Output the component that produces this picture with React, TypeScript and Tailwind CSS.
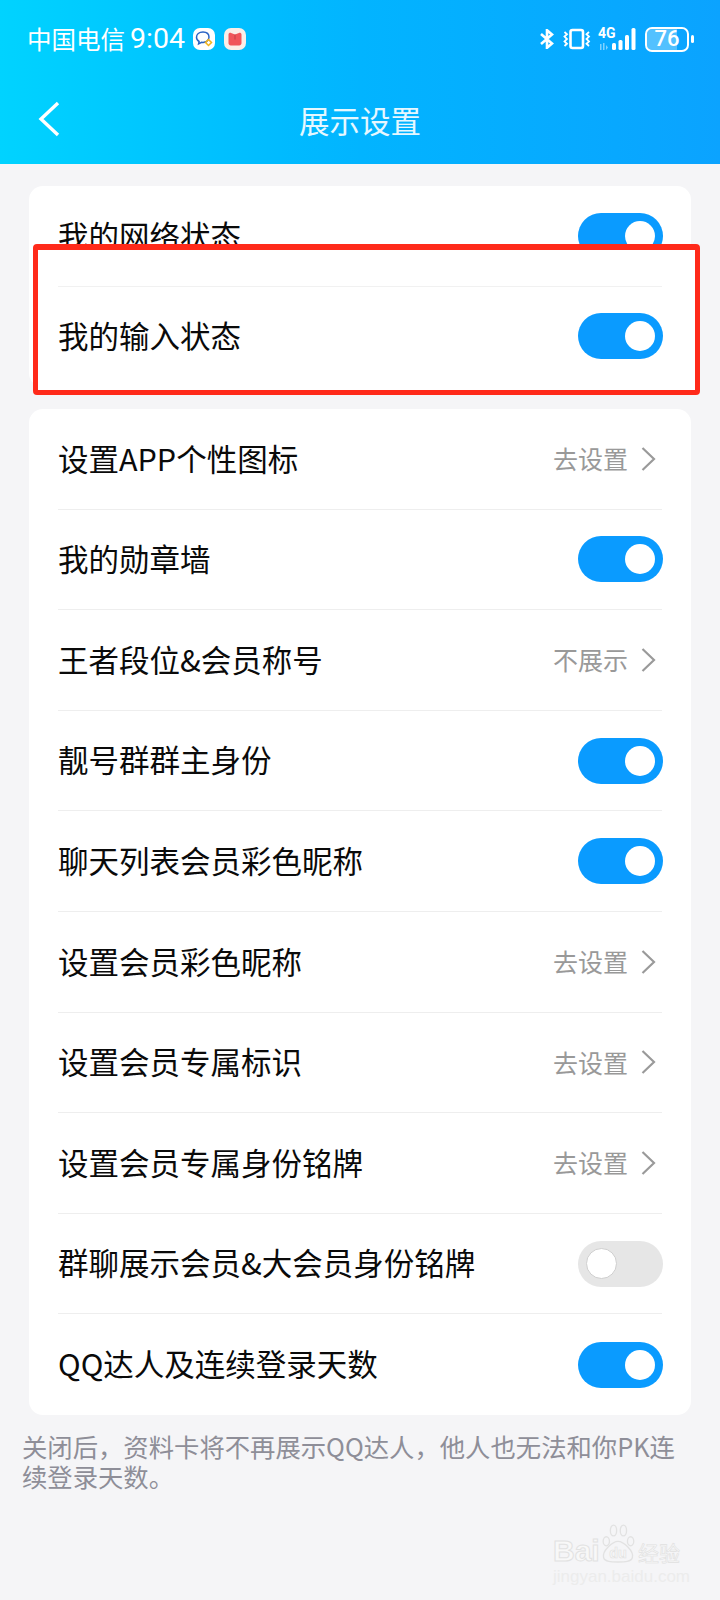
import React from "react";

const FONT = "font-['Noto_Sans_CJK_SC','Noto_Sans',sans-serif]";

function Toggle({ on = true }: { on?: boolean }) {
  return on ? (
    <div className="-mr-px flex h-[46px] w-[85px] shrink-0 items-center justify-end rounded-full bg-[#0a9bff] pr-[8px]">
      <div className="h-[30px] w-[30px] rounded-full bg-white" />
    </div>
  ) : (
    <div className="-mr-px flex h-[46px] w-[85px] shrink-0 items-center justify-start rounded-full bg-[#e6e6e6] pl-[8px]">
      <div className="h-[31px] w-[31px] rounded-full border border-[#cfcfcf] bg-white" />
    </div>
  );
}

function Chevron() {
  return (
    <svg width="15" height="26" viewBox="0 0 15 26" fill="none" className="ml-[13px] mr-[6px]">
      <path d="M1.5 2 L13 13 L1.5 24" stroke="#9a9a9a" strokeWidth="2.2" />
    </svg>
  );
}

function Row({ label, value, on, last }: { label: string; value?: string; on?: boolean; last?: boolean }) {
  return (
    <div className={`flex h-[100.6px] items-center justify-between ${last ? "" : "border-b border-[#eeeeee]"}`}>
      <span className="-translate-y-px text-[30.5px] leading-none text-[#0a0a0a]">{label}</span>
      {value ? (
        <div className="flex items-center">
          <span className="text-[25px] leading-none text-[#999999]">{value}</span>
          <Chevron />
        </div>
      ) : (
        <Toggle on={on} />
      )}
    </div>
  );
}

function QQIcon() {
  return (
    <div className="flex h-[22px] w-[22px] items-center justify-center rounded-[7px] bg-white">
      <svg width="20" height="18" viewBox="0 0 20 18" fill="none">
        <path d="M9 2C5 2 2.5 4.3 2.5 7.3c0 2 1.1 3.4 2.6 4.2l-.5 2.4 3-1.6c2.2.3 3.6 0 5-.8 1.6-1 2.4-2.4 2.4-4.2C15 4.3 13 2 9 2Z" stroke="#2b63c4" strokeWidth="1.5" />
        <path d="M14.5 9.5l3 3-3 3-3-3Z" stroke="#f2b41b" strokeWidth="1.5" />
      </svg>
    </div>
  );
}

function BookIcon() {
  return (
    <div className="ml-[9px] flex h-[22px] w-[22px] items-center justify-center rounded-[7px] bg-[#fbeee8]">
      <svg width="16" height="16" viewBox="0 0 16 16">
        <path d="M1.5 3.5c0-1.4 1.4-2 2.6-1.6L8 3.5l3.9-1.6c1.2-.4 2.6.2 2.6 1.6v8.7c0 1.2-1 2.3-2.3 2.3H3.8c-1.3 0-2.3-1.1-2.3-2.3Z" fill="#f0555a" />
        <path d="M8 3.5v5" stroke="#b9383d" strokeWidth="0.8" />
      </svg>
    </div>
  );
}

function StatusRight() {
  return (
    <div className="flex items-center">
      <svg width="16" height="20" viewBox="0 0 16 20" fill="none" stroke="white" strokeWidth="2.6">
        <path d="M2 5l11 9.500-5 4.300V1.200l5 4.300-11 9.500" />
      </svg>
      <svg width="32" height="24" viewBox="0 0 32 24" fill="none" stroke="white" className="ml-[6px]">
        <rect x="9.500" y="3" width="12.500" height="18" rx="2" strokeWidth="2.600" />
        <path d="M3.500 5l2.500 2.200-2.500 2.400 2.500 2.400-2.500 2.400 2.500 2.400-2.500 2.200M28 5l-2.500 2.200 2.500 2.400-2.500 2.400 2.500 2.400-2.500 2.400 2.500 2.200" strokeWidth="1.800" />
      </svg>
      <div className="relative ml-[5px] h-[24px] w-[44px]">
        <span className="absolute left-0 top-[-1px] font-['Roboto',sans-serif] text-[14px] font-bold leading-[14px] text-white">4G</span>
        <svg width="44" height="24" viewBox="0 0 44 24" className="absolute left-0 top-0">
          <path d="M2 17h1.500v6H2zM5 16h1.500v7H5zM8 18l2 2.500L8 23z" fill="#bfe6ff" fillOpacity="0.65" />
          <rect x="14" y="16" width="4" height="7" rx="1.500" fill="white" />
          <rect x="20.500" y="13" width="4" height="10" rx="1.500" fill="white" />
          <rect x="27" y="8" width="4" height="15" rx="1.500" fill="white" />
          <rect x="33.500" y="1" width="4" height="22" rx="1.500" fill="white" />
        </svg>
      </div>
      <div className="relative ml-[3px] flex h-[25px] w-[44px] items-center justify-center overflow-hidden rounded-[7px] border-2 border-white">
        <div className="absolute bottom-0 left-0 top-0 w-[75%] bg-white/30" />
        <span className="relative font-['Roboto',sans-serif] text-[22px] font-medium leading-none text-white">76</span>
      </div>
      <div className="ml-[2px] h-[8px] w-[3px] rounded-full bg-white" />
    </div>
  );
}

function Watermark() {
  return (
    <div className="absolute left-[553px] top-[1522px] flex w-[128px] flex-col whitespace-nowrap font-['Liberation_Sans',sans-serif]">
      <div className="flex h-[44px] items-end">
        <span className="w-[47px] shrink-0 text-[30px] font-bold leading-[30px] text-[#f8f8f8] [-webkit-text-stroke:1px_#e2e2e2]">Bai</span>
        <svg width="36" height="44" viewBox="0 0 40 44" fill="none" stroke="#e2e2e2" strokeWidth="1.500" className="shrink-0">
          <ellipse cx="7" cy="19" rx="3.500" ry="5" />
          <ellipse cx="15" cy="7" rx="3.500" ry="6" />
          <ellipse cx="26" cy="7" rx="3.500" ry="6" />
          <ellipse cx="34" cy="19" rx="3.500" ry="5" />
          <path d="M20 19c6 0 18 11 16 18-1 5-9 5-16 5s-15 0-16-5c-2-7 10-18 16-18Z" />
          <text x="20" y="38" textAnchor="middle" fontSize="16" fontWeight="700" fill="#f8f8f8" stroke="#e2e2e2" strokeWidth="0.700">du</text>
        </svg>
        <span className="ml-[2px] font-['Noto_Sans_CJK_SC',sans-serif] text-[21px] leading-[28px] text-[#f8f8f8] [-webkit-text-stroke:0.6px_#e0e0e0]">经验</span>
      </div>
      <span className="mt-[3px] text-[17px] leading-[16px] text-[#ececec]">jingyan.baidu.com</span>
    </div>
  );
}

export default function App() {
  return (
    <div className={`relative h-[1600px] w-[720px] overflow-hidden bg-[#f5f5f7] ${FONT}`}>
      <header className="h-[164px] bg-linear-to-r from-[#00d3ff] via-[#02b4ff] to-[#0ba3ff] text-white">
        <div className="flex h-[78px] items-center justify-between pl-[27px] pr-[26px]">
          <div className="flex items-center">
            <span className="text-[24.500px] leading-none">中国电信</span>
            <span className="ml-[5px] mr-[8px] font-['Roboto',sans-serif] text-[28.500px] leading-none">9:04</span>
            <QQIcon />
            <BookIcon />
          </div>
          <StatusRight />
        </div>
        <div className="relative flex h-[84px] items-center justify-center">
          <svg width="24" height="36" viewBox="0 0 24 36" fill="none" className="absolute left-[37px] top-[23px]">
            <path d="M21 2 L4 18 L21 34" stroke="white" strokeWidth="3.400" />
          </svg>
          <span className="text-[30.500px] leading-none text-white/90">展示设置</span>
        </div>
      </header>

      <main className="px-[29px] pt-[22px]">
        <section className="relative h-[201px] rounded-[14px] bg-white">
          <div className="h-[58px] overflow-hidden px-[29px]">
            <div className="flex h-[100px] items-center justify-between">
              <span className="-translate-y-px text-[30.500px] leading-none text-[#0a0a0a]">我的网络状态</span>
              <Toggle />
            </div>
          </div>
          <div className="absolute left-[4px] top-[58px] h-[151px] w-[667px] rounded-[4px] border-[5px] border-t-[6px] border-[#ff2a1a] bg-white pl-[20px] pr-[33px]">
            <div className="h-[37px] border-b border-[#f1f1f1]" />
            <div className="flex h-[98px] items-center justify-between">
              <span className="-translate-y-px text-[30.500px] leading-none text-[#0a0a0a]">我的输入状态</span>
              <Toggle />
            </div>
          </div>
        </section>

        <section className="mt-[22px] rounded-[14px] bg-white px-[29px]">
          <Row label="设置APP个性图标" value="去设置" />
          <Row label="我的勋章墙" on />
          <Row label="王者段位&会员称号" value="不展示" />
          <Row label="靓号群群主身份" on />
          <Row label="聊天列表会员彩色昵称" on />
          <Row label="设置会员彩色昵称" value="去设置" />
          <Row label="设置会员专属标识" value="去设置" />
          <Row label="设置会员专属身份铭牌" value="去设置" />
          <Row label="群聊展示会员&大会员身份铭牌" on={false} />
          <Row label="QQ达人及连续登录天数" on last />
        </section>
      </main>

      <p className="ml-[22px] mt-[16px] w-[660px] text-[25.350px] leading-[30px] text-[#8e8e98]">
        关闭后，资料卡将不再展示QQ达人，他人也无法和你PK连续登录天数。
      </p>

      <Watermark />
    </div>
  );
}
